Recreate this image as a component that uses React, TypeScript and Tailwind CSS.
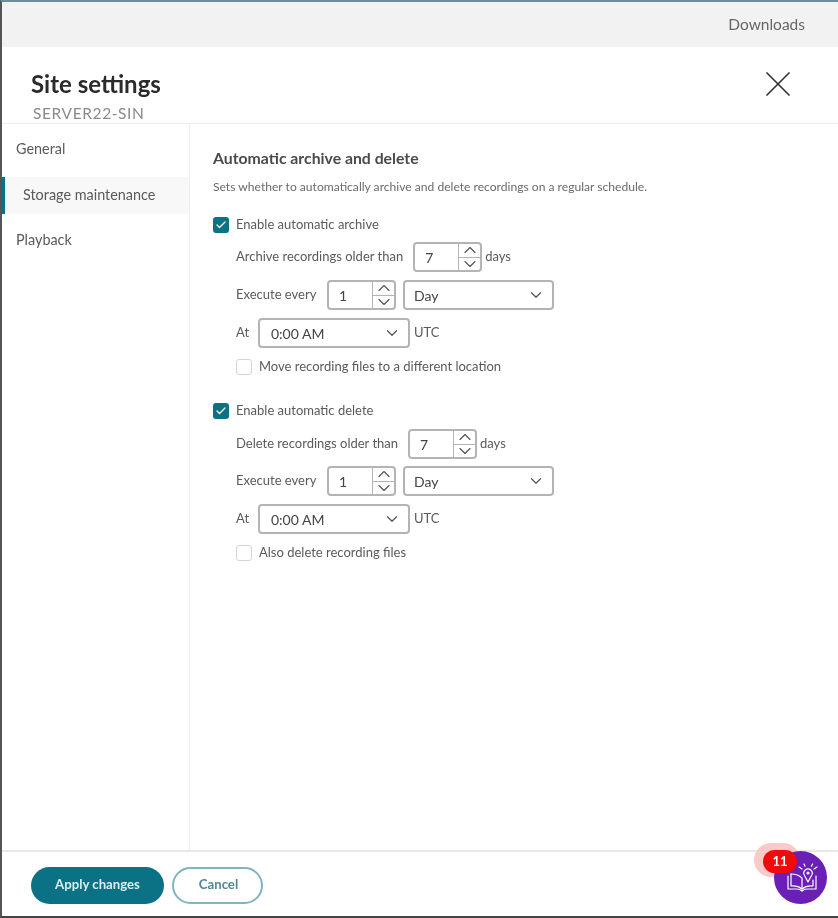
import { ChevronDown, ChevronUp, Check, X } from "lucide-react";

const Spinner = ({ value }: { value: string }) => (
  <div className="flex h-[30px] w-[69px] rounded-[4px] border-2 border-[#b4b4b4] bg-white">
    <div className="flex flex-1 items-center pl-[10px] text-[14px] text-[#444]">{value}</div>
    <div className="flex w-[22px] flex-col border-l border-[#b4b4b4]">
      <div className="flex flex-1 items-center justify-center overflow-hidden border-b border-[#b4b4b4]">
        <ChevronUp className="h-[20px] w-[20px] shrink-0 text-[#555]" strokeWidth={1.4} />
      </div>
      <div className="flex flex-1 items-center justify-center overflow-hidden">
        <ChevronDown className="h-[20px] w-[20px] shrink-0 text-[#555]" strokeWidth={1.4} />
      </div>
    </div>
  </div>
);

const Select = ({ value, className }: { value: string; className: string }) => (
  <div className={`flex h-[30px] items-center justify-between rounded-[4px] border-2 border-[#b4b4b4] bg-white pr-[7px] text-[14px] text-[#444] ${className}`}>
    <span>{value}</span>
    <ChevronDown className="h-[18px] w-[18px] text-[#555]" strokeWidth={1.6} />
  </div>
);

const Checkbox = ({ checked, label }: { checked: boolean; label: string }) => (
  <div className="flex h-[16px] items-center gap-[7px]">
    {checked ? (
      <div className="flex h-[16px] w-[16px] items-center justify-center rounded-[3px] bg-[#0b7286]">
        <Check className="h-[12px] w-[12px] text-white" strokeWidth={2.5} />
      </div>
    ) : (
      <div className="h-[16px] w-[16px] rounded-[3px] border border-[#d4d4d4] bg-white" />
    )}
    <span className="text-[13px] text-[#5a5a5a]">{label}</span>
  </div>
);

const GuideIcon = () => (
  <svg viewBox="0 0 40 36" className="h-[36px] w-[40px]" fill="none" stroke="white" strokeWidth="1.2" strokeLinejoin="round" strokeLinecap="round">
    {/* book */}
    <path d="M7 16V29H16C18 29 20 30 21 31C22 30 24 29 26 29H35V16" />
    <path d="M10 14V26C14 25.500 18 26.500 21 29C24 26.500 28 25.500 32 26V20" />
    <path d="M10 14C14 14 18 15 21 18V29" />
    {/* bulb and rays */}
    <path d="M27 22L23.500 15.500A4.200 4.200 0 1 1 30.500 15.500Z" />
    <circle cx="27" cy="13" r="1" />
    <path d="M18 7l3 2M23 4l1 2.200M31.500 4l-1 2.200M36 7l-3 2" />
  </svg>
);

const Group = ({
  enable,
  older,
  olderMargin,
  executeMargin,
  last,
}: {
  enable: string;
  older: string;
  olderMargin: string;
  executeMargin: string;
  last: string;
}) => (
  <div className="flex flex-col">
    <Checkbox checked label={enable} />
    <div className="ml-[23px] flex flex-col text-[13px] text-[#5a5a5a]">
      <div className={`flex items-center gap-[10px] ${olderMargin}`}>
        <span>{older}</span>
        <Spinner value="7" />
        <span className="-ml-[7px]">days</span>
      </div>
      <div className={`flex items-center gap-[7px] ${executeMargin}`}>
        <span className="w-[84px]">Execute every</span>
        <Spinner value="1" />
        <Select value="Day" className="w-[151px] pl-[9px]" />
      </div>
      <div className="mt-[8px] flex items-center gap-[4px]">
        <span className="w-[18px]">At</span>
        <Select value="0:00 AM" className="w-[152px] pl-[11px]" />
        <span>UTC</span>
      </div>
      <div className="mt-[11px]">
        <Checkbox checked={false} label={last} />
      </div>
    </div>
  </div>
);

export default function App() {
  return (
    <div className="relative flex h-[918px] w-[838px] flex-col overflow-hidden border-b-2 border-l-2 border-t-2 border-b-[#444] border-l-[#555] border-t-[#6b8f99] bg-white font-['Lato',sans-serif] blur-[0.4px]">
      <div className="flex h-[45px] shrink-0 items-center justify-end bg-[#f2f2f2] pr-[33px] text-[15.500px] text-[#666]">
        Downloads
      </div>

      <div className="relative h-[77px] shrink-0 border-b border-[#eee] pl-[29px] pt-[23px]">
        <div className="text-[24px] font-bold leading-[28px] text-[#2b2b2b]">Site settings</div>
        <div className="ml-[2px] mt-[6px] text-[15.500px] leading-[18px] tracking-[0.6px] text-[#8a8a8a]">SERVER22-SIN</div>
        <X className="absolute right-[38px] top-[15px] h-[44px] w-[44px] text-[#333]" strokeWidth={0.9} />
      </div>

      <div className="flex min-h-0 flex-1">
        <div className="w-[188px] shrink-0 border-r border-[#eee] pt-[6px] text-[14.400px] text-[#5a5a5a]">
          <div className="flex h-[37px] items-center pl-[14px]">General</div>
          <div className="mt-[10px] flex h-[37px] items-center border-l-[3px] border-[#0b7286] bg-[#f8f8f8] pb-[1px] pl-[18px]">
            Storage maintenance
          </div>
          <div className="mt-[7px] flex h-[37px] items-center pl-[14px]">Playback</div>
        </div>

        <div className="flex-1 pl-[23px] pt-[24px]">
          <div className="text-[15.800px] font-bold leading-[20px] text-[#4a4a4a]">Automatic archive and delete</div>
          <div className="mt-[11px] text-[12.100px] leading-[16px] text-[#6a6a6a]">
            Sets whether to automatically archive and delete recordings on a regular schedule.
          </div>
          <div className="mt-[22px] flex flex-col gap-[28px]">
            <Group enable="Enable automatic archive" older="Archive recordings older than" olderMargin="mt-[9px]" executeMargin="mt-[8px]" last="Move recording files to a different location" />
            <Group enable="Enable automatic delete" older="Delete recordings older than" olderMargin="mt-[10px]" executeMargin="mt-[7px]" last="Also delete recording files" />
          </div>
        </div>
      </div>

      <div className="flex h-[66px] shrink-0 items-start gap-[8px] border-t-2 border-[#e8e8e8] pl-[29px] pt-[15px] text-[13.200px] font-bold">
        <div className="flex h-[37px] w-[133px] items-center justify-center rounded-full bg-[#0b7286] pb-[2px] text-[#dcecef]">Apply changes</div>
        <div className="flex h-[37px] w-[91px] items-center justify-center rounded-full border-2 border-[#7fb4c0] bg-white pb-[2px] pl-[2px] text-[#4d8797]">Cancel</div>
      </div>

      <div className="absolute bottom-[39px] right-[38px] h-[34px] w-[46px] rounded-full bg-[#f9caca]" />
      <div className="absolute bottom-[12px] right-[11px] flex h-[53px] w-[53px] items-center justify-center rounded-full bg-[#6a1fb5]">
        <GuideIcon />
      </div>
      <div className="absolute bottom-[43px] right-[41px] flex h-[23px] w-[34px] items-center justify-center rounded-full bg-[#ef0b0b] text-[13px] font-bold text-white">
        11
      </div>
    </div>
  );
}
